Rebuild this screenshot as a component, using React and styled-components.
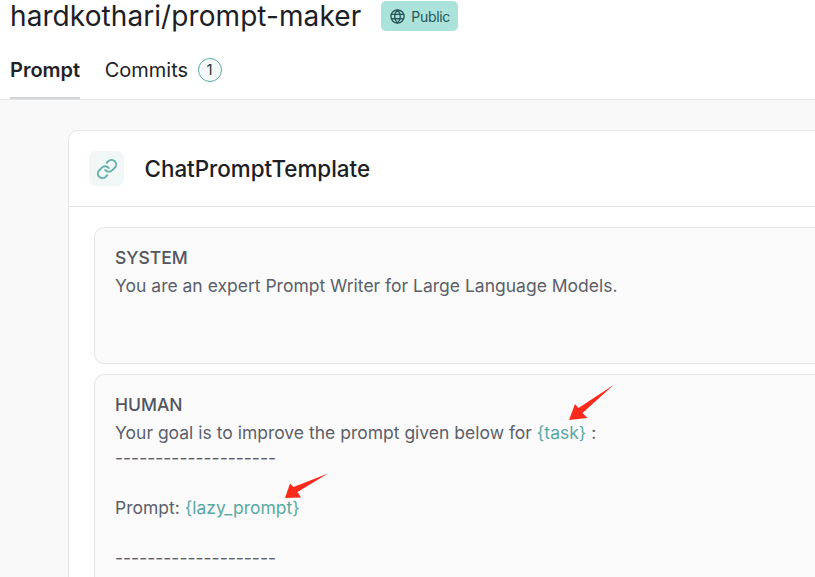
import React from 'react';
import styled, { createGlobalStyle } from 'styled-components';

const Global = createGlobalStyle`
  html, body {
    margin: 0;
    height: 100%;
    overflow: hidden;
    background: #fff;
    font-family: 'Inter', 'Liberation Sans', sans-serif;
  }
`;

const Page = styled.div`
  width: 815px;
  height: 577px;
  overflow: hidden;
  display: flex;
  flex-direction: column;
  position: relative;
`;

const Header = styled.header`
  padding: 0 0 0 10px;
  border-bottom: 1px solid #e5e5e5;
  height: 99px;
  flex-shrink: 0;
  display: flex;
  flex-direction: column;
`;

const TitleRow = styled.div`
  display: flex;
  align-items: center;
  gap: 20px;
  height: 32px;
`;

const RepoName = styled.h1`
  margin: 0;
  font-size: 28px;
  line-height: 32px;
  font-weight: 400;
  color: #1c2024;
  letter-spacing: 0.08px;
`;

const Badge = styled.span`
  display: flex;
  align-items: center;
  gap: 6px;
  height: 30px;
  padding: 0 8px 0 9px;
  box-sizing: border-box;
  border-radius: 5px;
  background: #abe3db;
  color: #27575a;
  font-size: 14px;
  letter-spacing: -0.3px;
`;

const Tabs = styled.nav`
  display: flex;
  gap: 24.5px;
  margin-top: 21px;
  height: 46px;
`;

const Tab = styled.div`
  display: flex;
  align-items: flex-start;
  gap: 9.5px;
  font-size: 20px;
  line-height: 34px;
  font-weight: ${p => (p.$active ? 600 : 400)};
  color: #1f2328;
  border-bottom: ${p => (p.$active ? '2px solid #d1d5db' : '2px solid transparent')};
  box-sizing: border-box;
  height: 46px;
`;

const Count = styled.span`
  width: 24px;
  height: 24px;
  box-sizing: border-box;
  margin-top: 5px;
  border: 1px solid #5aa9a5;
  border-radius: 50%;
  background: #f5faf9;
  display: flex;
  align-items: center;
  justify-content: center;
  font-size: 15px;
  color: #1f3a3a;
`;

const Content = styled.main`
  flex: 1;
  background: #f9f9f9;
  padding: 30px 0 0 68px;
`;

const Card = styled.section`
  width: 900px;
  background: #fff;
  border: 1px solid #e5e5e5;
  border-radius: 10px;
  box-sizing: border-box;
`;

const CardHead = styled.div`
  height: 75px;
  display: flex;
  align-items: center;
  gap: 20.5px;
  padding-left: 20px;
  border-bottom: 1px solid #e5e5e5;
`;

const IconBox = styled.div`
  width: 35px;
  height: 35px;
  border-radius: 7px;
  background: #f1f7f6;
  display: flex;
  align-items: center;
  justify-content: center;
  color: #64b0aa;
`;

const CardTitle = styled.h2`
  margin: 0;
  font-size: 22.4px;
  font-weight: 500;
  color: #1c2024;
`;

const Messages = styled.div`
  padding: 20px 25px;
  display: flex;
  flex-direction: column;
  gap: 10px;
`;

const Message = styled.div`
  border: 1px solid #e5e5e5;
  border-radius: 10px;
  background: #fafafa;
  padding: 19px 20px;
  min-height: ${p => p.$minHeight || 0}px;
  box-sizing: border-box;
`;

const Role = styled.div`
  font-size: 17.5px;
  line-height: 22px;
  font-weight: 500;
  color: #52565e;
`;

const Body = styled.div`
  font-size: 17.5px;
  line-height: 25px;
  color: #5c5f69;
  margin-top: 4px;
  white-space: pre;
`;

const Variable = styled.span`
  color: #5aa8a2;
`;

const Arrow = styled.svg`
  position: absolute;
  left: ${p => p.$x}px;
  top: ${p => p.$y}px;
`;

const GlobeIcon = () => (
  <svg width="15" height="15" viewBox="0 0 24 24" fill="none" stroke="currentColor" strokeWidth="2.2">
    <circle cx="12" cy="12" r="10.500" />
    <path d="M2.500 8.500h19M2.500 15.500h19M12 1.500c3 3 4.500 6.500 4.500 10.500s-1.500 7.500-4.500 10.500c-3-3-4.500-6.500-4.500-10.500s1.500-7.500 4.500-10.500z" />
  </svg>
);

const LinkIcon = () => (
  <svg width="22" height="22" viewBox="0 0 24 24" fill="none" stroke="currentColor" strokeWidth="2.1" strokeLinecap="round" strokeLinejoin="round">
    <path d="M10 13a5 5 0 0 0 7.540.540l3-3a5 5 0 0 0-7.070-7.070l-1.720 1.710" />
    <path d="M14 11a5 5 0 0 0-7.540-.540l-3 3a5 5 0 0 0 7.070 7.070l1.710-1.710" />
  </svg>
);

const dashes = '--------------------';

export default function App() {
  return (
    <Page>
      <Global />
      <Header>
        <TitleRow>
          <RepoName>hardkothari/prompt-maker</RepoName>
          <Badge><GlobeIcon />Public</Badge>
        </TitleRow>
        <Tabs>
          <Tab $active>Prompt</Tab>
          <Tab>Commits<Count>1</Count></Tab>
        </Tabs>
      </Header>
      <Content>
        <Card>
          <CardHead>
            <IconBox><LinkIcon /></IconBox>
            <CardTitle>ChatPromptTemplate</CardTitle>
          </CardHead>
          <Messages>
            <Message $minHeight={137}>
              <Role>SYSTEM</Role>
              <Body>You are an expert Prompt Writer for Large Language Models.</Body>
            </Message>
            <Message>
              <Role>HUMAN</Role>
              <Body>
                Your goal is to improve the prompt given below for <Variable>{'{task}'}</Variable> :{'\n'}
                {dashes}{'\n\n'}
                Prompt: <Variable>{'{lazy_prompt}'}</Variable>{'\n\n'}
                {dashes}
              </Body>
            </Message>
          </Messages>
        </Card>
      </Content>
      <Arrow $x={565} $y={382} width="50" height="40" viewBox="565 382 50 40">
        <path d="M613.500 385 L582.500 413 L587.500 418 L569 420 L575 404 L578.500 408 Z" fill="#fb2a1c" />
      </Arrow>
      <Arrow $x={282} $y={470} width="48" height="30" viewBox="282 470 48 30">
        <path d="M328 473.500 L297.500 492 L301 497.500 L285 498 L290 483.500 L293.500 487 Z" fill="#fb2a1c" />
      </Arrow>
    </Page>
  );
}
